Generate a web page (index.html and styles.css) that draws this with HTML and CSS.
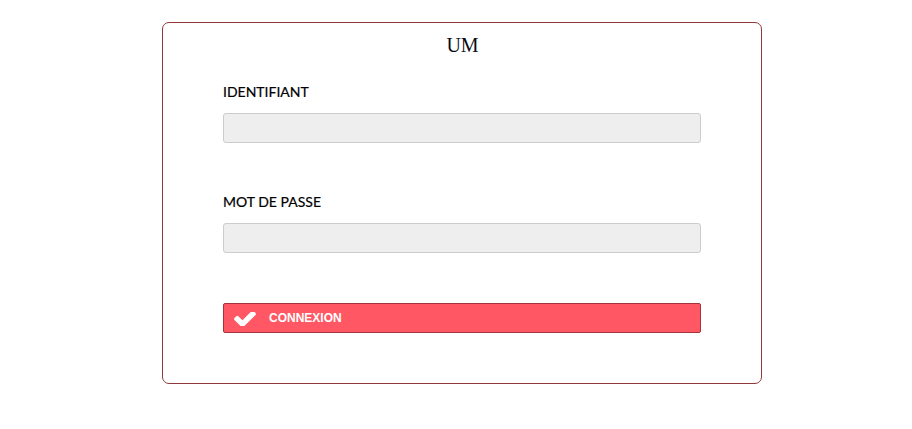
FILE: index.html
```html
<!DOCTYPE html>
<html lang="fr">
<head>
<meta charset="utf-8">
<title>UM</title>
<link rel="stylesheet" href="styles.css">
</head>
<body>
<div class="login-box">
  <h1 class="title">UM</h1>
  <form class="login-form">
    <div class="field">
      <label class="label" for="id">IDENTIFIANT</label>
      <input class="input" id="id" type="text">
    </div>
    <div class="field">
      <label class="label" for="pw">MOT DE PASSE</label>
      <input class="input" id="pw" type="password">
    </div>
    <button class="btn" type="button">
      <svg class="btn-icon" viewBox="121 430 1550 992" width="22" height="14" aria-hidden="true"><path fill="#fff" d="M1671 566q0 40-28 68l-724 724-136 136q-28 28-68 28t-68-28l-136-136-362-362q-28-28-28-68t28-68l136-136q28-28 68-28t68 28l294 295 656-657q28-28 68-28t68 28l136 136q28 28 28 68z"/></svg>
      <span class="btn-text">CONNEXION</span>
    </button>
  </form>
</div>
</body>
</html>
```

FILE: styles.css
```css
html, body {
  margin: 0;
  padding: 0;
  background: #fff;
}
body {
  padding: 22px 0 0 162px;
}
.login-box {
  box-sizing: border-box;
  width: 600px;
  height: 362px;
  border: 1px solid #8e3a3c;
  border-radius: 7px;
  padding: 10px 60px 0 60px;
}
.title {
  margin: 0 0 0 1px;
  font-family: "Liberation Serif", "DejaVu Serif", serif;
  font-weight: normal;
  font-size: 20px;
  line-height: 24px;
  text-align: center;
  color: #0a0a14;
}
.login-form {
  display: flex;
  flex-direction: column;
  margin-top: 25px;
}
.field {
  display: flex;
  flex-direction: column;
  margin-bottom: 49px;
}
.field + .field {
  margin-bottom: 50px;
}
.label {
  font-family: Lato, "Open Sans", sans-serif;
  font-size: 14px;
  line-height: 20px;
  color: #000;
  margin-bottom: 11px;
  -webkit-text-stroke: 0.2px #000;
}
.input {
  box-sizing: border-box;
  width: 478px;
  height: 30px;
  margin: 0;
  background: #eeeeee;
  border: 1px solid #cccccc;
  border-radius: 3px;
  padding: 0 8px;
}
.btn {
  box-sizing: border-box;
  display: flex;
  align-items: center;
  width: 478px;
  height: 30px;
  margin: 0;
  padding: 0 0 0 10px;
  background: #ff5864;
  border: 1px solid #a2343b;
  border-radius: 2px;
  cursor: pointer;
}
.btn-icon {
  display: block;
  margin-top: 2px;
}
.btn-text {
  margin-left: 13px;
  font-family: "Liberation Sans", Arial, sans-serif;
  font-weight: bold;
  font-size: 12px;
  color: #fff;
}
```
